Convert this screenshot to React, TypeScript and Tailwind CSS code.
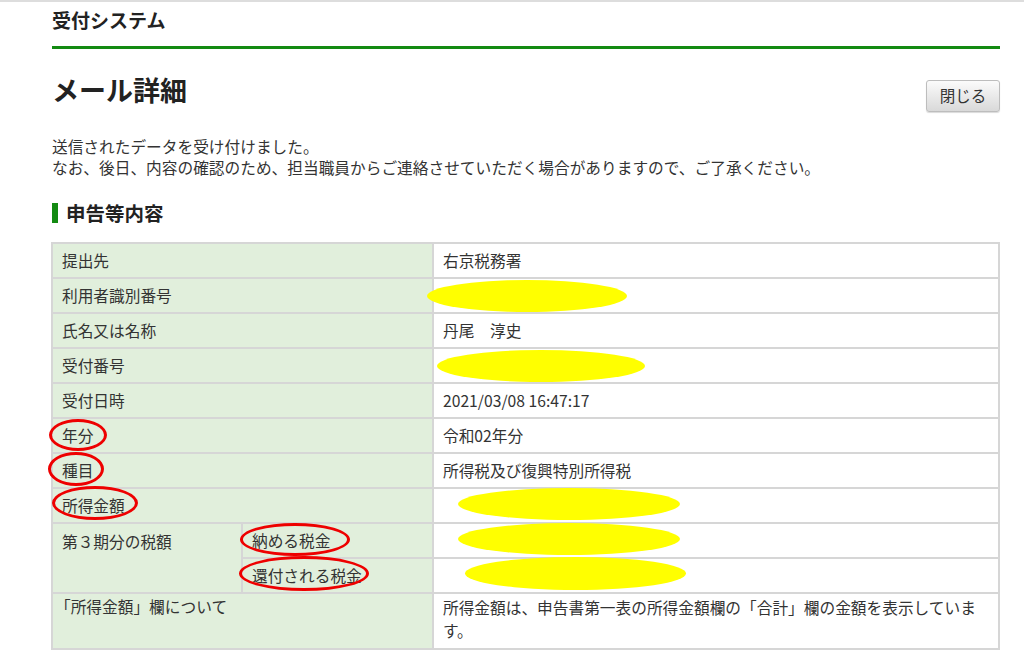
import React from 'react';

// 楕円の注記（黄色の塗りつぶし／赤い囲み）は表の左上からの座標で置く
const redactions = [
  { left: 376, top: 38, width: 200, height: 32 },
  { left: 386, top: 108, width: 208, height: 32 },
  { left: 407, top: 246, width: 222, height: 32 },
  { left: 407, top: 281, width: 222, height: 32 },
  { left: 414, top: 315, width: 221, height: 33 },
];

const circles = [
  { left: -2, top: 177, width: 58, height: 32 },
  { left: -3, top: 210, width: 56, height: 34 },
  { left: 1, top: 244, width: 86, height: 34 },
  { left: 189, top: 281, width: 110, height: 33 },
  { left: 188, top: 314, width: 130, height: 35 },
];

const rows: { label: string; value: string }[] = [
  { label: '提出先', value: '右京税務署' },
  { label: '利用者識別番号', value: '' },
  { label: '氏名又は名称', value: '丹尾　淳史' },
  { label: '受付番号', value: '' },
  { label: '受付日時', value: '2021/03/08 16:47:17' },
  { label: '年分', value: '令和02年分' },
  { label: '種目', value: '所得税及び復興特別所得税' },
  { label: '所得金額', value: '' },
];

const labelCell = 'border-2 border-[#d6d6d6] bg-[#e1efdc] px-[9px] h-[35px] align-middle text-left font-normal';
const valueCell = 'border-2 border-[#d6d6d6] bg-white px-[9px] h-[35px] align-middle';

export default function App() {
  return (
    <div
      className="min-h-screen bg-white text-[#333] border-t-2 border-[#dddddd]"
      style={{ fontFamily: '"Noto Sans CJK JP", "Noto Sans", sans-serif' }}
    >
      <div className="pl-[52px] pr-[24px]">
        <div className="pt-[4px] h-[44px] text-[19px] font-bold text-[#222] leading-[28px]">受付システム</div>
        <div className="h-[3px] bg-[#138a12]" />

        <div className="flex items-start justify-between pt-[23px]">
          <h1 className="text-[27px] font-bold text-[#222] leading-[36px]">メール詳細</h1>
          <button className="mt-[8px] w-[74px] h-[32px] rounded-[3px] border border-[#bdbdbd] bg-gradient-to-b from-[#fbfbfb] to-[#d9d9d9] text-[15.5px] text-[#333] shadow-[0_1px_1px_rgba(0,0,0,0.15)]">
            閉じる
          </button>
        </div>

        <div className="mt-[24px] text-[15.7px] leading-[21px]">
          <p>送信されたデータを受け付けました。</p>
          <p>なお、後日、内容の確認のため、担当職員からご連絡させていただく場合がありますので、ご了承ください。</p>
        </div>

        <div className="mt-[22px] flex items-center gap-[8px]">
          <span className="w-[6px] h-[20px] bg-[#138a12]" />
          <h2 className="text-[19.5px] font-bold text-[#222] leading-[26px]">申告等内容</h2>
        </div>

        <div className="relative mt-[16px] -ml-[1px]">
          <table className="w-[949px] border-collapse text-[15.7px] table-fixed">
            <colgroup>
              <col className="w-[190px]" />
              <col className="w-[191px]" />
              <col />
            </colgroup>
            <tbody>
              {rows.map((r) => (
                <tr key={r.label}>
                  <th colSpan={2} className={labelCell}>{r.label}</th>
                  <td className={valueCell}>{r.value}</td>
                </tr>
              ))}
              <tr>
                <th rowSpan={2} className={`${labelCell} align-top pt-[6px]`}>第３期分の税額</th>
                <th className={labelCell}>納める税金</th>
                <td className={valueCell}></td>
              </tr>
              <tr>
                <th className={labelCell}>還付される税金</th>
                <td className={valueCell}></td>
              </tr>
              <tr>
                <th colSpan={2} className="border-2 border-[#d6d6d6] bg-[#e1efdc] pl-[2px] pr-[9px] pt-[2px] pb-[6px] h-[56px] align-top text-left font-normal leading-[22px]">
                  「所得金額」欄について
                </th>
                <td className="border-2 border-[#d6d6d6] bg-white px-[9px] pt-[2px] pb-[5px] h-[56px] align-top leading-[23px]">
                  所得金額は、申告書第一表の所得金額欄の「合計」欄の金額を表示しています。
                </td>
              </tr>
            </tbody>
          </table>

          {redactions.map((e, i) => (
            <div
              key={`y${i}`}
              className="absolute rounded-[50%] bg-[#ffff00]"
              style={{ left: e.left, top: e.top, width: e.width, height: e.height }}
            />
          ))}
          {circles.map((e, i) => (
            <div
              key={`r${i}`}
              className="absolute rounded-[50%] border-[3px] border-[#ee0000]"
              style={{ left: e.left, top: e.top, width: e.width, height: e.height }}
            />
          ))}
        </div>
      </div>
    </div>
  );
}
